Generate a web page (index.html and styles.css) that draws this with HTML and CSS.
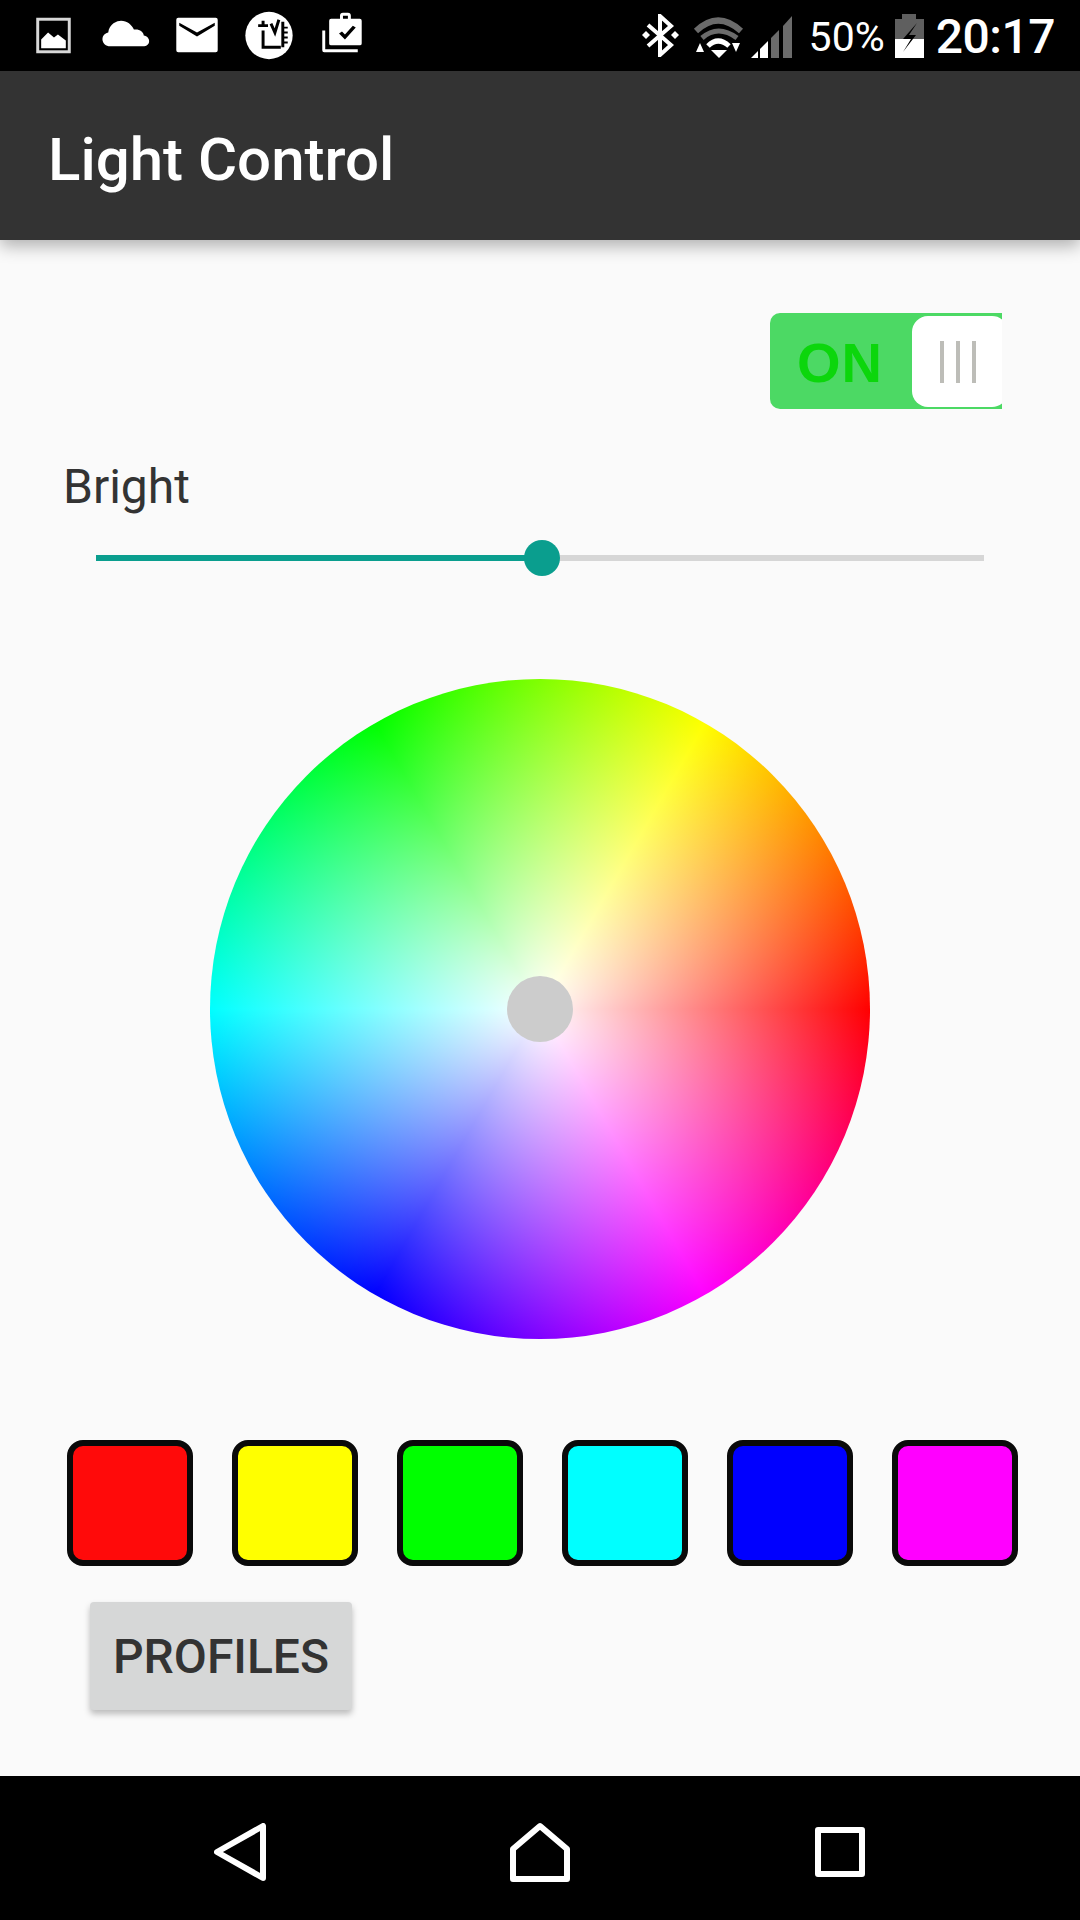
FILE: index.html
```html
<!DOCTYPE html>
<html lang="en">
<head>
    <meta charset="UTF-8">
    <meta name="viewport" content="width=device-width, initial-scale=1.0">
    <title>Light Control</title>
    <link rel="stylesheet" href="styles.css">
</head>
<body>
    <div class="screen">
        <!-- Status bar -->
        <div class="status-bar">
            <div class="status-left">
                <svg class="cell" viewBox="0 0 72 72"><rect x="20.5" y="19.5" width="32" height="33" fill="none" stroke="#d8d8d8" stroke-width="3"/><path d="M24 49v-9l7-7 6 5 4-3 8 6v8z" fill="#fff"/></svg>
                <svg class="cell" viewBox="0 0 72 72"><path d="M21 47C12 47 10 35 19 33 20 24 28 21 32 21 38 21 43 25 45 30 50 29 55 32 55 36 62 37 63 47 54 47z" fill="#fff"/></svg>
                <svg class="cell" viewBox="0 0 72 72"><path fill-rule="evenodd" d="M17 18h38a2 2 0 0 1 2 2v31a2 2 0 0 1-2 2H17a2 2 0 0 1-2-2V20a2 2 0 0 1 2-2zm1 8 18 11 18-11v-3L36 33 18 23z" fill="#fff"/></svg>
                <svg class="cell" viewBox="0 0 72 72"><circle cx="36" cy="36" r="24" fill="#fff"/><path d="M25 26h10M30 21v5M30 31v17h18M38 24l4 9 4-13M50 22v26" fill="none" stroke="#000" stroke-width="3"/><path d="M50 28h5M50 33h5M50 38h5M50 43h5" fill="none" stroke="#000" stroke-width="2"/></svg>
                <svg class="cell" viewBox="0 0 72 72"><g transform="translate(-3 0)"><path fill-rule="evenodd" d="M29 19h9v-3a3 3 0 0 1 3-3h5a3 3 0 0 1 3 3v3h9a2 2 0 0 1 2 2v23a2 2 0 0 1-2 2H29a2 2 0 0 1-2-2V21a2 2 0 0 1 2-2zm12 0h5v-3h-5zm-4 15 6 6 11-12-3-2-8 9-3-3z" fill="#fff"/><path d="M20 31h3v19h33v3H22a2 2 0 0 1-2-2z" fill="#fff"/></g></svg>
            </div>
            <div class="status-right">
                <svg class="ic-bt" viewBox="0 0 38 43"><path d="M6 11 29 31 18 41V2L29 12 6 32" fill="none" stroke="#fff" stroke-width="4"/><path d="M0 21l4-4 4 4-4 4zM29 21l4-4 4 4-4 4z" fill="#fff"/></svg>
                <svg class="ic-wifi" viewBox="0 0 52 42"><path d="M3 15Q25-6 48 15" fill="none" stroke="#6b6b6b" stroke-width="6"/><path d="M9 22Q25 8 44 22" fill="none" stroke="#6b6b6b" stroke-width="5"/><path d="M15 30Q25 20 36 30" fill="none" stroke="#fff" stroke-width="5"/><path d="M18 34h16l-8 8zM3 36l4-9 4 9zM39 27h8l-4 9z" fill="#fff"/></svg>
                <svg class="ic-signal" viewBox="0 0 42 42"><path d="M0 42l7-7v7z" fill="#fff"/><path d="M9 33l8-8v17H9z" fill="#fff"/><path d="M20 22l8-8v28h-8z" fill="#6b6b6b"/><path d="M32 10l9-10v42h-9z" fill="#6b6b6b"/></svg>
                <span class="pct">50%</span>
                <svg class="ic-batt" viewBox="0 0 29 44"><path d="M7 0h14v5h8v20H0V5h7z" fill="#5f5f5f"/><path d="M0 25h29v19H0z" fill="#fff"/><path d="M22 9 8 25h8L8 38 21 21h-7z" fill="#000"/></svg>
                <span class="clock">20:17</span>
            </div>
        </div>

        <div class="app-bar">Light Control</div>

        <div class="content">
            <div class="switch-row">
                <div class="switch">
                    <span class="switch-label">ON</span>
                    <div class="switch-knob">
                        <i></i><i></i><i></i>
                    </div>
                </div>
            </div>

            <div class="bright-label">Bright</div>
            <div class="slider">
                <div class="slider-fill"></div>
                <div class="slider-thumb"></div>
            </div>

            <div class="wheel-wrap">
                <div class="wheel">
                    <div class="wheel-dot"></div>
                </div>
            </div>

            <div class="swatches">
                <div class="swatch red"></div>
                <div class="swatch yellow"></div>
                <div class="swatch green"></div>
                <div class="swatch cyan"></div>
                <div class="swatch blue"></div>
                <div class="swatch magenta"></div>
            </div>

            <button class="profiles">PROFILES</button>
        </div>

        <!-- Navigation bar -->
        <div class="nav-bar">
            <svg class="nav-back" viewBox="0 0 52 58"><path d="M3 29 49 3v52z" fill="none" stroke="#fff" stroke-width="6" stroke-linejoin="round"/></svg>
            <svg class="nav-home" viewBox="0 0 60 60"><path d="M3 57V27L30 4l27 23v30z" fill="none" stroke="#fff" stroke-width="6" stroke-linejoin="round"/></svg>
            <svg class="nav-recent" viewBox="0 0 50 50"><rect x="3" y="3" width="44" height="44" fill="none" stroke="#fff" stroke-width="6" stroke-linejoin="round"/></svg>
        </div>
    </div>
</body>
</html>
```

FILE: styles.css
```css
* {
    margin: 0;
    padding: 0;
    box-sizing: border-box;
    font-family: Roboto, 'Noto Sans', sans-serif;
}
body {
    background: #fafafa;
}
.screen {
    width: 1080px;
    height: 1920px;
    display: flex;
    flex-direction: column;
    overflow: hidden;
}
.status-bar {
    height: 71px;
    background: #000;
    display: flex;
    justify-content: space-between;
    align-items: center;
    color: #fff;
}
.status-left {
    display: flex;
    padding-left: 17px;
}
.cell {
    width: 72px;
    height: 71px;
    display: block;
}
.status-right {
    display: flex;
    align-items: center;
    padding-right: 25px;
}
.ic-bt {
    width: 38px;
    height: 43px;
    margin-right: 13px;
}
.ic-wifi {
    width: 52px;
    height: 42px;
    margin-right: 6px;
    margin-top: 3px;
}
.ic-signal {
    width: 42px;
    height: 42px;
    margin-right: 16px;
    margin-top: 3px;
}
.pct {
    font-size: 41px;
    margin-right: 10px;
    margin-top: 3px;
}
.ic-batt {
    width: 29px;
    height: 44px;
    margin-right: 12px;
}
.clock {
    font-size: 48px;
    font-weight: 500;
    letter-spacing: -0.5px;
    margin-top: 1px;
}
.app-bar {
    height: 169px;
    background: #333;
    color: #fff;
    font-size: 60px;
    font-weight: 500;
    display: flex;
    align-items: center;
    padding: 7px 0 0 48px;
    box-shadow: 0 6px 16px rgba(0, 0, 0, 0.3);
    position: relative;
}
.content {
    flex: 1;
    background: #fafafa;
}
.switch-row {
    display: flex;
    justify-content: flex-end;
    padding: 73px 78px 0 0;
}
.switch {
    width: 232px;
    height: 96px;
    background: #4cd964;
    border-radius: 10px 0 0 10px;
    display: flex;
    align-items: center;
    position: relative;
    overflow: hidden;
}
.switch-label {
    font-family: 'Liberation Sans', sans-serif;
    font-size: 56px;
    font-weight: bold;
    color: #0cd60c;
    margin: 3px 0 0 27px;
    letter-spacing: 1px;
}
.switch-knob {
    position: absolute;
    left: 142px;
    top: 3px;
    width: 96px;
    height: 91px;
    background: #fff;
    border-radius: 16px;
    display: flex;
    gap: 12px;
    align-items: center;
    padding-left: 28px;
}
.switch-knob i {
    width: 4px;
    height: 42px;
    background: #bdbdb8;
}
.bright-label {
    font-size: 48px;
    color: #333;
    padding: 50px 0 0 63px;
    line-height: 56px;
}
.slider {
    height: 6px;
    margin: 40px 96px 0;
    background: #d6d6d6;
    position: relative;
}
.slider-fill {
    width: 446px;
    height: 6px;
    background: #0a9e8e;
}
.slider-thumb {
    position: absolute;
    left: 428px;
    top: -15px;
    width: 36px;
    height: 36px;
    border-radius: 50%;
    background: #0a9e8e;
}
.wheel-wrap {
    display: flex;
    justify-content: center;
    padding-top: 118px;
}
.wheel {
    width: 660px;
    height: 660px;
    border-radius: 50%;
    background:
        radial-gradient(circle closest-side, #fff, rgba(255, 255, 255, 0)),
        conic-gradient(from 90deg, #f00, #f0f, #00f, #0ff, #0f0, #ff0, #f00);
    display: flex;
    justify-content: center;
    align-items: center;
}
.wheel-dot {
    width: 66px;
    height: 66px;
    border-radius: 50%;
    background: #ccc;
}
.swatches {
    display: flex;
    gap: 39px;
    padding: 101px 0 0 67px;
}
.swatch {
    width: 126px;
    height: 126px;
    border: 6px solid #0a0a0a;
    border-radius: 16px;
}
.red { background: #ff0a0a; }
.yellow { background: #ff0; }
.green { background: #0f0; }
.cyan { background: #0ff; }
.blue { background: #00f; }
.magenta { background: #f0f; }
.profiles {
    display: block;
    width: 262px;
    height: 108px;
    margin: 36px 0 0 90px;
    background: #d6d7d7;
    border: none;
    border-radius: 4px;
    color: #333;
    font-size: 48px;
    font-weight: 500;
    box-shadow: 0 4px 6px rgba(0, 0, 0, 0.25);
}
.nav-bar {
    height: 144px;
    background: #000;
    padding-top: 8px;
    display: grid;
    grid-template-columns: repeat(3, 300px);
    justify-content: center;
    justify-items: center;
    align-items: center;
}
.nav-back {
    width: 52px;
    height: 58px;
}
.nav-home {
    width: 60px;
    height: 60px;
}
.nav-recent {
    width: 50px;
    height: 50px;
}
```
